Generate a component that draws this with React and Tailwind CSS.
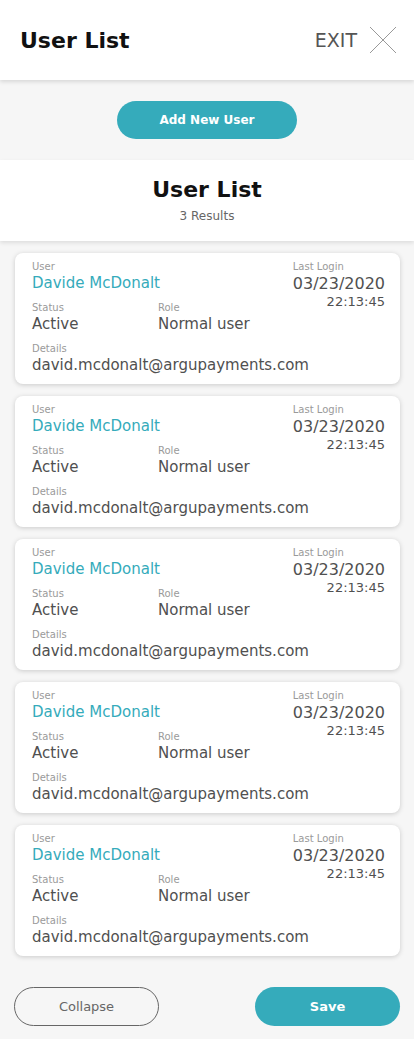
import React from 'react';

const users = Array.from({ length: 5 }, (_, i) => ({
  id: i,
  name: 'Davide McDonalt',
  status: 'Active',
  role: 'Normal user',
  email: 'david.mcdonalt@argupayments.com',
  date: '03/23/2020',
  time: '22:13:45',
}));

const UserCard = ({ user }) => (
  <div className="relative h-[131px] rounded-lg bg-white shadow-[0_1px_5px_rgba(0,0,0,0.18)] pl-[17px] pr-[15px] pt-[7px]">
    {/* Last login */}
    <div className="absolute right-[15px] top-[7px] flex flex-col items-end">
      <span className="self-start text-[10px] leading-[14px] text-[#9a9a9a]">Last Login</span>
      <span className="text-[16px] leading-[20px] text-[#505050]">{user.date}</span>
      <span className="text-[13px] leading-[16px] text-[#505050]">{user.time}</span>
    </div>

    <div className="flex flex-col">
      <span className="text-[10px] leading-[14px] text-[#9a9a9a]">User</span>
      <span className="text-[15px] leading-[18px] text-[#35abbb]">{user.name}</span>
    </div>

    <div className="mt-[9px] flex">
      <div className="flex w-[126px] flex-col">
        <span className="text-[10px] leading-[14px] text-[#9a9a9a]">Status</span>
        <span className="text-[15px] leading-[18px] text-[#505050]">{user.status}</span>
      </div>
      <div className="flex flex-col">
        <span className="text-[10px] leading-[14px] text-[#9a9a9a]">Role</span>
        <span className="text-[15px] leading-[18px] text-[#505050]">{user.role}</span>
      </div>
    </div>

    <div className="mt-[9px] flex flex-col">
      <span className="text-[10px] leading-[14px] text-[#9a9a9a]">Details</span>
      <span className="text-[15px] leading-[18px] text-[#505050]">{user.email}</span>
    </div>
  </div>
);

export default function App() {
  return (
    <div className="min-h-[1039px] w-[414px] bg-[#f6f6f6] font-['DejaVu_Sans',sans-serif]">
      {/* Header */}
      <header className="relative z-10 flex h-[80px] items-center justify-between bg-white pl-[20px] pr-[17px] shadow-[0_2px_4px_rgba(0,0,0,0.12)]">
        <h1 className="text-[22px] font-bold text-[#111]">User List</h1>
        <div className="flex items-center gap-[12px]">
          <span className="text-[19px] text-[#555]">EXIT</span>
          <svg width="28" height="28" viewBox="0 0 28 28" className="text-[#999]">
            <path d="M1 1 L27 27 M27 1 L1 27" stroke="currentColor" strokeWidth="1" fill="none" />
          </svg>
        </div>
      </header>

      {/* Add user */}
      <div className="flex h-[80px] items-center justify-center">
        <button className="h-[38px] w-[180px] rounded-full bg-[#35abbb] text-[12px] font-bold text-white">
          Add New User
        </button>
      </div>

      {/* List title */}
      <section className="relative z-10 flex h-[81px] flex-col items-center bg-white pt-[15px] shadow-[0_2px_4px_rgba(0,0,0,0.1)]">
        <h2 className="text-[22px] leading-[30px] font-bold text-[#111]">User List</h2>
        <span className="mt-[2px] text-[12px] text-[#666]">3 Results</span>
      </section>

      {/* Cards */}
      <div className="flex flex-col gap-[12px] pt-[12px] pl-[15px] pr-[14px]">
        {users.map((u) => (
          <UserCard key={u.id} user={u} />
        ))}
      </div>

      {/* Footer actions */}
      <div className="flex justify-between px-[14px] pt-[31px] pb-[13px]">
        <button className="h-[39px] w-[145px] rounded-full border border-[#666] text-[13px] text-[#666]">
          Collapse
        </button>
        <button className="h-[39px] w-[145px] rounded-full bg-[#35abbb] text-[13px] font-bold text-white">
          Save
        </button>
      </div>
    </div>
  );
}
